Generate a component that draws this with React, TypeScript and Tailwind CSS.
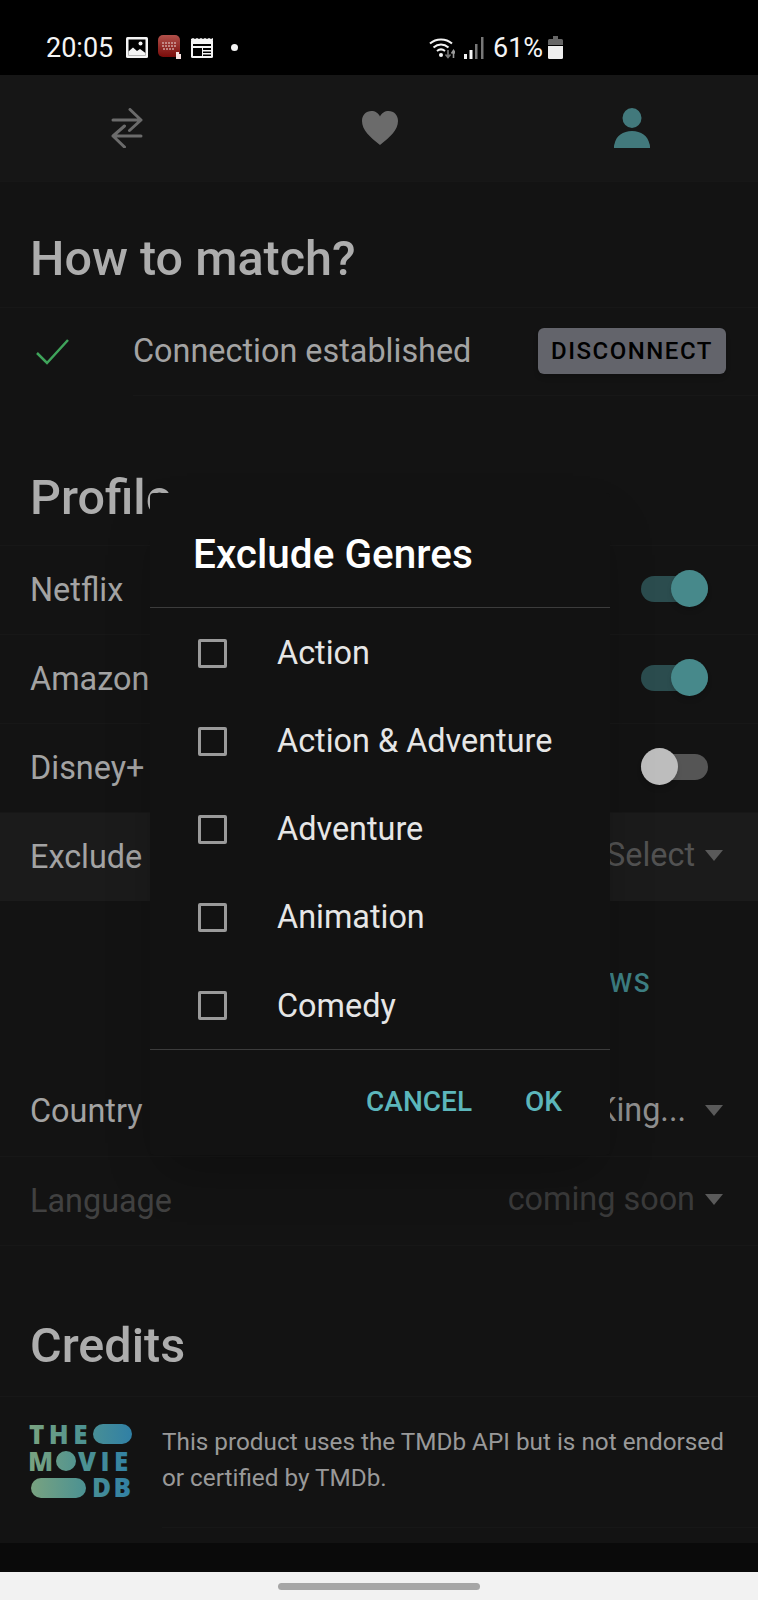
const genres = ['Action', 'Action & Adventure', 'Adventure', 'Animation', 'Comedy'];

function StatusBar() {
  return (
    <div className="flex h-[75px] items-center bg-black pt-[20px] pl-[46px] text-[#f4f4f4]">
      <span className="w-[80px] pt-[1px] text-[27px] leading-none">20:05</span>
      <svg width="22" height="21" viewBox="0 0 22 21">
        <rect width="22" height="21" rx="1.5" fill="#f4f4f4" />
        <rect x="2.5" y="2.5" width="17" height="16" fill="#000" />
        <circle cx="14.5" cy="6.5" r="2" fill="#f4f4f4" />
        <path d="M2.5 18.5v-4l4.5-4 4 3.5 3-2 5.500 4v2.500z" fill="#f4f4f4" />
      </svg>
      <svg className="ml-[10px]" width="24" height="25" viewBox="0 0 24 25">
        <defs>
          <linearGradient id="redApp" x1="0" y1="0" x2="0" y2="1">
            <stop offset="0" stopColor="#b0504a" />
            <stop offset="1" stopColor="#7a0c0a" />
          </linearGradient>
        </defs>
        <rect width="22" height="22" rx="5" fill="url(#redApp)" />
        <path d="M4 8h14M4 11h14M5 14h12" stroke="#cfa3a0" strokeWidth="1.6" strokeDasharray="2 1" />
        <path d="M18 17h3v2h2v5h-5z" fill="#f6e2e0" />
      </svg>
      <svg className="ml-[9px]" width="22" height="20" viewBox="0 0 22 20">
        <rect y="1" width="22" height="19" rx="1.5" fill="#f4f4f4" />
        <rect x="2" y="6" width="18" height="12" fill="#000" />
        <path d="M0 1l2-1 2 1 2-1 2 1 2-1 2 1 2-1 2 1 2-1 2 1 2-1v2H0z" fill="#f4f4f4" />
        <rect x="2" y="8" width="18" height="2" fill="#f4f4f4" />
        <path d="M11 10h1v8h-1zM12 12h8v1.500h-8zM12 15h8v1.500h-8z" fill="#f4f4f4" />
      </svg>
      <span className="ml-[18px] size-[7px] rounded-full bg-[#f4f4f4]" />
      <svg className="ml-[191px]" width="26" height="22" viewBox="0 0 26 22" fill="none">
        <path d="M1 6.500C7 1 17 1 23 6.500M4.500 10.500c4.500-4 10.500-4 15 0M8 14c2.500-2 5.500-2 8 0" stroke="#f4f4f4" strokeWidth="2" />
        <circle cx="12" cy="18" r="2" fill="#f4f4f4" />
        <path d="M19 13v7m-2.500-2.500 2.500 3 2.500-3" stroke="#777" strokeWidth="1.600" />
        <path d="M24.500 21v-7m-2 2.500 2-3 2 3" stroke="#999" strokeWidth="1.600" />
      </svg>
      <svg className="ml-[9px]" width="20" height="22" viewBox="0 0 20 22">
        <rect x="0" y="17" width="3" height="5" fill="#f4f4f4" />
        <rect x="5.500" y="13" width="3" height="9" fill="#f4f4f4" />
        <rect x="11" y="7" width="2.500" height="15" fill="#777" />
        <rect x="17" y="0" width="2.500" height="22" fill="#777" />
      </svg>
      <span className="ml-[9px] pt-[1px] text-[27px] leading-none">61%</span>
      <svg className="ml-[5px]" width="15" height="23" viewBox="0 0 15 23">
        <path d="M5 0h5v3h3.500A1.500 1.500 0 0 1 15 4.500V9H0V4.500A1.500 1.500 0 0 1 1.500 3H5z" fill="#666" />
        <path d="M0 10h15v11.500a1.500 1.500 0 0 1-1.500 1.500h-12A1.500 1.500 0 0 1 0 21.500z" fill="#eee" />
      </svg>
    </div>
  );
}

function NavBar() {
  return (
    <div className="grid h-[106px] grid-cols-3 items-center bg-[#161616]">
      <div className="flex justify-center pl-[1px]">
        <svg width="32" height="40" viewBox="0 0 32 40" fill="none" stroke="#6b6b6b" strokeWidth="3" strokeLinecap="round" strokeLinejoin="round">
          <path d="M2 12h28L19 1.500M30 12 18.500 22.500" />
          <path d="M30 28H2l11.500-10M2 28l11.500 11" />
        </svg>
      </div>
      <div className="flex justify-center pl-[2px]">
        <svg width="36" height="34" viewBox="0 0 36 34">
          <path d="M18 34C8 26 0 19 0 10 0 4 4 0 9.500 0 13 0 16.500 2 18 5.500 19.500 2 23 0 26.500 0 32 0 36 4 36 10c0 9-8 16-18 24z" fill="#6b6b6b" />
        </svg>
      </div>
      <div className="flex justify-center pl-[1px]">
        <svg width="36" height="40" viewBox="0 0 36 40">
          <ellipse cx="18" cy="10" rx="9.500" ry="10" fill="#42797c" />
          <path d="M0 40c0-2 0-3 .5-4C2 28 9 23 18 23s16 5 17.500 13c.5 1 .5 2 .5 4z" fill="#42797c" />
        </svg>
      </div>
    </div>
  );
}

function Heading({ children }: { children: string }) {
  return <h2 className="text-[48.5px] leading-none font-medium text-[#adadad]">{children}</h2>;
}

function Toggle({ on }: { on: boolean }) {
  return (
    <div className="relative mr-[15px] h-[38px] w-[67px]">
      <div className={`absolute top-[6px] left-0 h-[26px] w-[67px] rounded-full ${on ? 'bg-[#2b4c4e]' : 'bg-[#555555]'}`} />
      <div className={`absolute top-0 size-[37px] rounded-full shadow-md ${on ? 'right-0 bg-[#47898b]' : 'left-0 bg-[#bdbdbd]'}`} />
    </div>
  );
}

function Caret() {
  return <span className="ml-[10px] h-0 w-0 border-x-[9px] border-t-[11px] border-x-transparent border-t-[#5a5a5a]" />;
}

function Row({
  label,
  className = '',
  labelClass = 'text-[#a3a3a3]',
  children,
}: {
  label: string;
  className?: string;
  labelClass?: string;
  children: React.ReactNode;
}) {
  return (
    <div className={`flex h-[89px] items-center justify-between border-t border-[#171717] pr-[35px] pb-[3px] pl-[30px] ${className}`}>
      <span className={`pt-[3px] text-[32.4px] leading-none whitespace-nowrap ${labelClass}`}>{label}</span>
      {children}
    </div>
  );
}

function TmdbLogo() {
  return (
    <svg width="106" height="76" viewBox="0 0 106 76" className="mb-[4px] shrink-0">
      <defs>
        <linearGradient id="tmdb" gradientUnits="userSpaceOnUse" x1="0" y1="0" x2="106" y2="0">
          <stop offset="0" stopColor="#7ba37f" />
          <stop offset="0.5" stopColor="#4f9391" />
          <stop offset="1" stopColor="#2f7fa6" />
        </linearGradient>
      </defs>
      <g fill="url(#tmdb)" fontFamily="'Open Sans', sans-serif" fontWeight="800" fontSize="26">
        <text x="1" y="21" letterSpacing="4.500">THE</text>
        <rect x="65" y="1" width="39" height="20" rx="10" />
        <text x="0" y="48">M</text>
        <circle cx="38" cy="38" r="10" />
        <text x="50" y="48" letterSpacing="4.500">VIE</text>
        <rect x="3" y="55" width="55" height="20" rx="10" />
        <text x="64" y="74" letterSpacing="2.500">DB</text>
      </g>
    </svg>
  );
}

function ExcludeDialog() {
  return (
    <div className="absolute top-[493px] left-[150px] flex h-[662px] w-[460px] flex-col rounded-[4px] bg-[#121212] shadow-2xl">
      <div className="flex h-[114px] items-end pb-[33px] pl-[43px]">
        <span className="text-[40.5px] leading-none font-medium text-white">Exclude Genres</span>
      </div>
      <div className="border-y border-[#3c3c3c]">
        {genres.map((g) => (
          <div key={g} className="flex h-[88.2px] items-center pt-[2px] pl-[48px]">
            <span className="size-[29px] rounded-[2px] border-[3px] border-[#9a9a9a]" />
            <span className="ml-[50px] text-[32.4px] leading-none text-[#e6e6e6]">{g}</span>
          </div>
        ))}
      </div>
      <div className="flex flex-1 justify-end gap-[53px] pt-[38px] pr-[48px] text-[28px] leading-none font-medium text-[#5cb6bb]">
        <span>CANCEL</span>
        <span>OK</span>
      </div>
    </div>
  );
}

export default function App() {
  return (
    <div className="relative flex h-[1600px] w-[758px] flex-col overflow-hidden bg-[#131313] font-['Roboto',sans-serif]">
      <StatusBar />
      <NavBar />
      <main className="flex-1 border-t border-[#171717]">
        <section className="flex h-[125px] items-center pt-[30px] pl-[30px]">
          <Heading>How to match?</Heading>
        </section>
        <div className="flex h-[89px] items-center border-t border-[#171717] pl-[36px]">
          <svg width="34" height="26" viewBox="0 0 34 26" fill="none" stroke="#3fa45b" strokeWidth="2.500">
            <path d="M1 14l10 10L32 1" />
          </svg>
          <div className="ml-[63px] flex h-full flex-1 items-center justify-between border-b border-[#171717] pr-[32px] pb-[2px]">
            <span className="pt-[2px] text-[32.4px] leading-none text-[#a3a3a3]">Connection established</span>
            <button className="h-[46px] w-[188px] rounded-[6px] bg-[#63646b] text-[24px] leading-none font-medium tracking-[1.500px] text-black shadow-md">
              DISCONNECT
            </button>
          </div>
        </div>
        <section className="flex h-[149px] items-center pt-[55px] pl-[30px]">
          <Heading>Profile</Heading>
        </section>
        <Row label="Netflix"><Toggle on /></Row>
        <Row label="Amazon Prime"><Toggle on /></Row>
        <Row label="Disney+"><Toggle on={false} /></Row>
        <Row label="Exclude Genres" className="bg-[#1b1b1b]">
          <div className="flex items-center text-[32.4px] leading-none text-[#525252]">
            Select
            <Caret />
          </div>
        </Row>
        <div className="flex h-[166px] items-center justify-end pr-[107px] pb-[2px]">
          <span className="text-[26px] leading-none font-medium tracking-[1.500px] text-[#3e8084]">SHOWS</span>
        </div>
        <Row label="Country" className="border-t-0">
          <div className="flex items-center text-[32.4px] leading-none text-[#8f8f8f]">
            <span className="mr-[9px]">United King...</span>
            <Caret />
          </div>
        </Row>
        <Row label="Language" labelClass="text-[#414141]">
          <div className="flex items-center text-[32.4px] leading-none text-[#3a3a3a]">
            coming soon
            <Caret />
          </div>
        </Row>
        <section className="flex h-[151px] items-center border-t border-[#171717] pt-[50px] pl-[30px]">
          <Heading>Credits</Heading>
        </section>
        <div className="flex h-[132px] items-center border-t border-[#171717] pl-[28px]">
          <TmdbLogo />
          <p className="ml-[28px] flex h-full flex-1 items-center border-b border-[#171717] pr-[20px] pb-[4px] text-[24.3px] leading-[36px] text-[#999999]">
            This product uses the TMDb API but is not endorsed or certified by TMDb.
          </p>
        </div>
      </main>
      <div className="h-[29px] bg-[#0a0a0a]" />
      <div className="flex h-[28px] items-center justify-center bg-[#f2f2f2]">
        <span className="h-[7px] w-[202px] rounded-full bg-[#a6a6a6]" />
      </div>
      <ExcludeDialog />
    </div>
  );
}
